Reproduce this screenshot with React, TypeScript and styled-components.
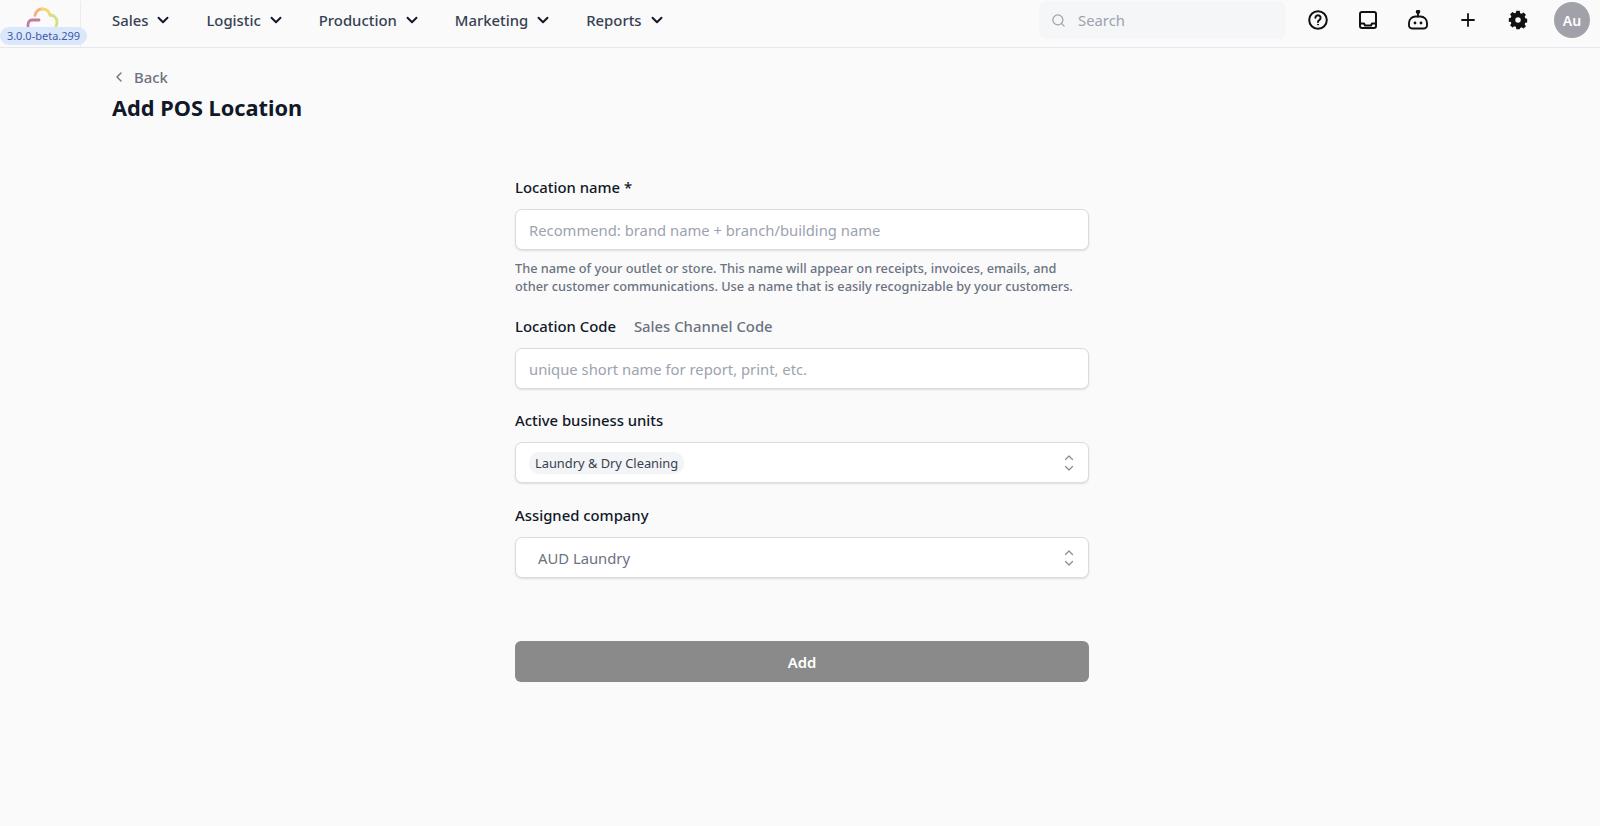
import React from 'react';
import styled, { createGlobalStyle } from 'styled-components';
import { ChevronDown, ChevronLeft, Search as SearchIcon } from 'lucide-react';

const Global = createGlobalStyle`
  html, body { margin: 0; padding: 0; background: #fafafb; }
  body { font-family: "Noto Sans", sans-serif; color: #111827; }
  * { box-sizing: border-box; }
`;

const Page = styled.div`
  min-height: 826px;
  background: #fafafb;
`;
const TopBar = styled.header`
  height: 48px;
  display: flex;
  align-items: flex-start;
  padding-top: 1px;
  border-bottom: 1px solid #e5e7eb;
  background: #fafafb;
`;
const LogoCell = styled.div`
  position: relative;
  width: 81px;
  height: 46px;
  flex: none;
  border-right: 1px solid #ececef;
  display: flex;
  justify-content: center;
  padding: 6px 0 0 6px;
`;
const Version = styled.span`
  position: absolute;
  left: 0;
  top: 26px;
  width: 87px;
  height: 18px;
  border-radius: 9px;
  background: #dbe7fb;
  color: #3d5aa8;
  font-size: 11px;
  line-height: 18px;
  text-align: center;
  white-space: nowrap;
`;
const Nav = styled.nav`
  display: flex;
  align-items: center;
  gap: 34px;
  height: 38px;
  margin-left: 31px;
  flex: 1;
`;
const NavItem = styled.div`
  display: flex;
  align-items: center;
  gap: 6px;
  font-size: 14.85px;
  font-weight: 500;
  color: #374151;
  svg { color: #111827; }
`;
const SearchBox = styled.div`
  width: 247px;
  height: 38px;
  border-radius: 8px;
  background: #f5f6f8;
  display: flex;
  align-items: center;
  gap: 12px;
  padding-left: 12px;
  font-size: 14.85px;
  color: #9ca3af;
  margin-right: 7px;
`;
const IconRow = styled.div`
  display: flex;
  align-items: center;
  height: 38px;
  margin-right: 11px;
`;
const IconSlot = styled.div`
  width: 50px;
  display: flex;
  justify-content: center;
  svg { display: block; }
`;
const Avatar = styled.div`
  width: 36px;
  height: 36px;
  margin-top: 1px;
  border-radius: 50%;
  background: #a1a1aa;
  color: #fff;
  font-size: 14px;
  font-weight: 600;
  display: flex;
  align-items: center;
  justify-content: center;
  margin-right: 10px;
`;
const Head = styled.div`
  padding: 19px 0 0 111px;
`;
const BackLink = styled.div`
  display: flex;
  align-items: center;
  gap: 7px;
  height: 20px;
  font-size: 14.85px;
  font-weight: 500;
  color: #6b7280;
  svg { color: #6b7280; }
`;
const Title = styled.h1`
  margin: 7px 0 0 1px;
  font-size: 21.75px;
  line-height: 28px;
  font-weight: 700;
  color: #111827;
`;
const Form = styled.form`
  width: 574px;
  margin: 54px 0 0 515px;
  display: flex;
  flex-direction: column;
`;
const Field = styled.div<{ $gap?: number }>`
  margin-bottom: ${p => p.$gap ?? 20}px;
`;
const LabelRow = styled.div`
  display: flex;
  gap: 18px;
  height: 22px;
  align-items: center;
  margin-bottom: 11px;
`;
const Label = styled.label<{ $muted?: boolean }>`
  font-size: 14.85px;
  font-weight: 500;
  color: ${p => (p.$muted ? '#6b7280' : '#111827')};
`;
const InputBox = styled.div`
  height: 41px;
  background: #fff;
  border: 1px solid #d9dce1;
  border-radius: 7px;
  box-shadow: 0 1px 2px rgba(0, 0, 0, 0.12);
  display: flex;
  align-items: center;
  justify-content: space-between;
  padding: 0 14px 0 13px;
  font-size: 14.8px;
`;
const Placeholder = styled.span`
  color: #9ca3af;
`;
const Value = styled.span`
  color: #6b7280;
  padding-left: 9px;
`;
const Chip = styled.span`
  background: #f3f4f6;
  color: #374151;
  border-radius: 10px;
  height: 22px;
  line-height: 22px;
  padding: 0 6px;
  font-size: 12.85px;
  font-weight: 400;
`;
const Help = styled.p`
  margin: 9px 0 0;
  font-size: 12.75px;
  line-height: 18px;
  font-weight: 500;
  color: #6b7280;
`;
const Submit = styled.button`
  margin-top: 63px;
  height: 41px;
  width: 100%;
  border: 0;
  border-radius: 6px;
  background: #8a8a8a;
  color: #fff;
  font: 600 14.85px "Noto Sans", sans-serif;
`;

const Logo = () => (
  <svg width="34" height="22" viewBox="0 0 34 22" fill="none" strokeWidth="2.8" strokeLinecap="round">
    <path d="M2 19c-.5-3.500 1.500-6 4-6h7" stroke="#c27ba0" />
    <path d="M9 8.500C10 4 13 2 16 2" stroke="#f3b27a" />
    <path d="M16 2c4 0 7 2 8 6" stroke="#f5d76e" />
    <path d="M24 8c4 0 7 3 7 7 0 1.500-.3 3-1 4" stroke="#cfe27f" />
  </svg>
);
const HelpIcon = () => (
  <svg width="20" height="20" viewBox="0 0 20 20" fill="none" stroke="#111" strokeWidth="2" strokeLinecap="round">
    <circle cx="10" cy="10" r="8.800" />
    <path d="M7.400 7.800a2.600 2.600 0 1 1 3.900 2.300c-.9.500-1.300 1-1.300 1.900" />
    <circle cx="10" cy="14.600" r=".5" fill="#111" strokeWidth="1" />
  </svg>
);
const Inbox = () => (
  <svg width="18" height="18" viewBox="0 0 18 18" fill="none" stroke="#111" strokeWidth="2" strokeLinejoin="round">
    <rect x="1" y="1" width="16" height="16" rx="2" />
    <path d="M1 12.500h4l1 2h6l1-2h4" />
  </svg>
);
const Bot = () => (
  <svg width="22" height="20" viewBox="0 0 22 20" fill="none" stroke="#111" strokeWidth="1.900" strokeLinecap="round" strokeLinejoin="round">
    <circle cx="11" cy="1.800" r="1.300" fill="#111" />
    <path d="M11 3v3.500" />
    <path d="M2 15v-2a6.500 6.500 0 0 1 6.500-6.500h5A6.500 6.500 0 0 1 20 13v2a3 3 0 0 1-3 3.500H5A3 3 0 0 1 2 15z" />
    <circle cx="8" cy="13" r="1.400" fill="#111" stroke="none" />
    <circle cx="14" cy="13" r="1.400" fill="#111" stroke="none" />
  </svg>
);
const Plus = () => (
  <svg width="14" height="14" viewBox="0 0 14 14" fill="none" stroke="#111" strokeWidth="1.800" strokeLinecap="round">
    <path d="M7 1v12M1 7h12" />
  </svg>
);
const Gear = () => (
  <svg width="20" height="20" viewBox="0 0 24 24" fill="#111">
    <path fillRule="evenodd" d="M10 1h4l.6 2.800 1.700.7 2.400-1.500 2.800 2.800-1.500 2.400.7 1.700 2.300.5v4.500l-2.300.5-.7 1.700 1.500 2.400-2.800 2.800-2.400-1.500-1.700.7L14 23h-4l-.6-2.800-1.700-.7-2.400 1.500-2.800-2.800 1.500-2.400-.7-1.700L1 14.250v-4.500l2.300-.5.7-1.700-1.500-2.400 2.800-2.800 2.400 1.500 1.700-.7zM12 8.700a3.300 3.300 0 1 0 0 6.600 3.300 3.300 0 0 0 0-6.600z" />
  </svg>
);
const UpDown = () => (
  <svg width="10" height="20" viewBox="0 0 10 20" fill="none" stroke="#868b94" strokeWidth="1.200" strokeLinecap="round" strokeLinejoin="round">
    <path d="M1.500 6.500 5 3l3.500 3.500" />
    <path d="M1.500 13.500 5 17l3.500-3.500" />
  </svg>
);

const navItems = ['Sales', 'Logistic', 'Production', 'Marketing', 'Reports'];

export default function App() {
  return (
    <Page>
      <Global />
      <TopBar>
        <LogoCell>
          <Logo />
          <Version>3.0.0-beta.299</Version>
        </LogoCell>
        <Nav>
          {navItems.map(n => (
            <NavItem key={n}>
              {n}
              <ChevronDown size={18} strokeWidth={2.6} />
            </NavItem>
          ))}
        </Nav>
        <SearchBox>
          <SearchIcon size={15} />
          Search
        </SearchBox>
        <IconRow>
          <IconSlot><HelpIcon /></IconSlot>
          <IconSlot><Inbox /></IconSlot>
          <IconSlot><Bot /></IconSlot>
          <IconSlot><Plus /></IconSlot>
          <IconSlot><Gear /></IconSlot>
        </IconRow>
        <Avatar>Au</Avatar>
      </TopBar>
      <Head>
        <BackLink>
          <ChevronLeft size={16} />
          Back
        </BackLink>
        <Title>Add POS Location</Title>
      </Head>
      <Form>
        <Field>
          <LabelRow><Label>Location name *</Label></LabelRow>
          <InputBox><Placeholder>Recommend: brand name + branch/building name</Placeholder></InputBox>
          <Help>
            The name of your outlet or store. This name will appear on receipts, invoices, emails, and
            other customer communications. Use a name that is easily recognizable by your customers.
          </Help>
        </Field>
        <Field>
          <LabelRow>
            <Label>Location Code</Label>
            <Label $muted>Sales Channel Code</Label>
          </LabelRow>
          <InputBox><Placeholder>unique short name for report, print, etc.</Placeholder></InputBox>
        </Field>
        <Field $gap={21}>
          <LabelRow><Label>Active business units</Label></LabelRow>
          <InputBox>
            <Chip>Laundry &amp; Dry Cleaning</Chip>
            <UpDown />
          </InputBox>
        </Field>
        <Field $gap={0}>
          <LabelRow><Label>Assigned company</Label></LabelRow>
          <InputBox>
            <Value>AUD Laundry</Value>
            <UpDown />
          </InputBox>
        </Field>
        <Submit type="button">Add</Submit>
      </Form>
    </Page>
  );
}
